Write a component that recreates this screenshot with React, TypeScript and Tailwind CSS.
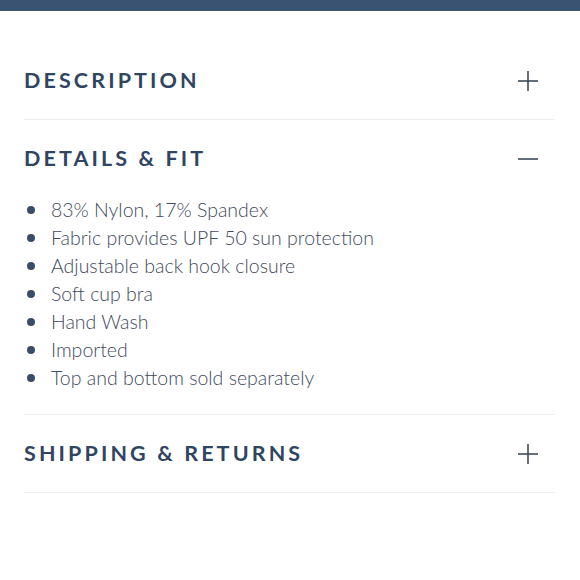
import { useState } from "react";

interface Section {
  title: string;
  items?: string[];
}

const sections: Section[] = [
  { title: "DESCRIPTION" },
  {
    title: "DETAILS & FIT",
    items: [
      "83% Nylon, 17% Spandex",
      "Fabric provides UPF 50 sun protection",
      "Adjustable back hook closure",
      "Soft cup bra",
      "Hand Wash",
      "Imported",
      "Top and bottom sold separately",
    ],
  },
  { title: "SHIPPING & RETURNS" },
];

function PlusMinus({ open }: { open: boolean }) {
  return (
    <svg width="20" height="20" viewBox="0 0 20 20" className="mr-[17px]">
      <line x1="0" y1="10" x2="20" y2="10" stroke="#3d4a5a" strokeWidth="1.6" />
      {!open && (
        <line x1="10" y1="0" x2="10" y2="20" stroke="#3d4a5a" strokeWidth="1.6" />
      )}
    </svg>
  );
}

export default function App() {
  const [openIndex, setOpenIndex] = useState<number | null>(1);

  return (
    <div className="w-[580px] h-[580px] bg-white font-['Lato','Noto_Sans',sans-serif]">
      <div className="h-[11px] bg-[#3b5373]" />
      <div className="pt-[31px] pl-[24px] pr-[25px]">
        {sections.map((s, i) => {
          const open = openIndex === i;
          return (
            <div key={s.title} className="border-b border-[#efefeb]">
              <button
                type="button"
                className="flex w-full h-[77px] items-center justify-between"
                onClick={() => setOpenIndex(open ? null : i)}
              >
                <span className="text-[21.5px] font-bold tracking-[0.145em] text-[#2f4562]">
                  {s.title}
                </span>
                <PlusMinus open={open} />
              </button>
              {open && s.items && (
                <ul className="-mt-[1px] pb-[22px]">
                  {s.items.map((item) => (
                    <li
                      key={item}
                      className="flex items-center h-[28px] text-[19.5px] font-light text-[#3f4a5a]"
                    >
                      <span className="ml-[3px] mr-[16px] w-[8px] h-[8px] rounded-full bg-[#3a4d66]" />
                      {item}
                    </li>
                  ))}
                </ul>
              )}
            </div>
          );
        })}
      </div>
    </div>
  );
}
